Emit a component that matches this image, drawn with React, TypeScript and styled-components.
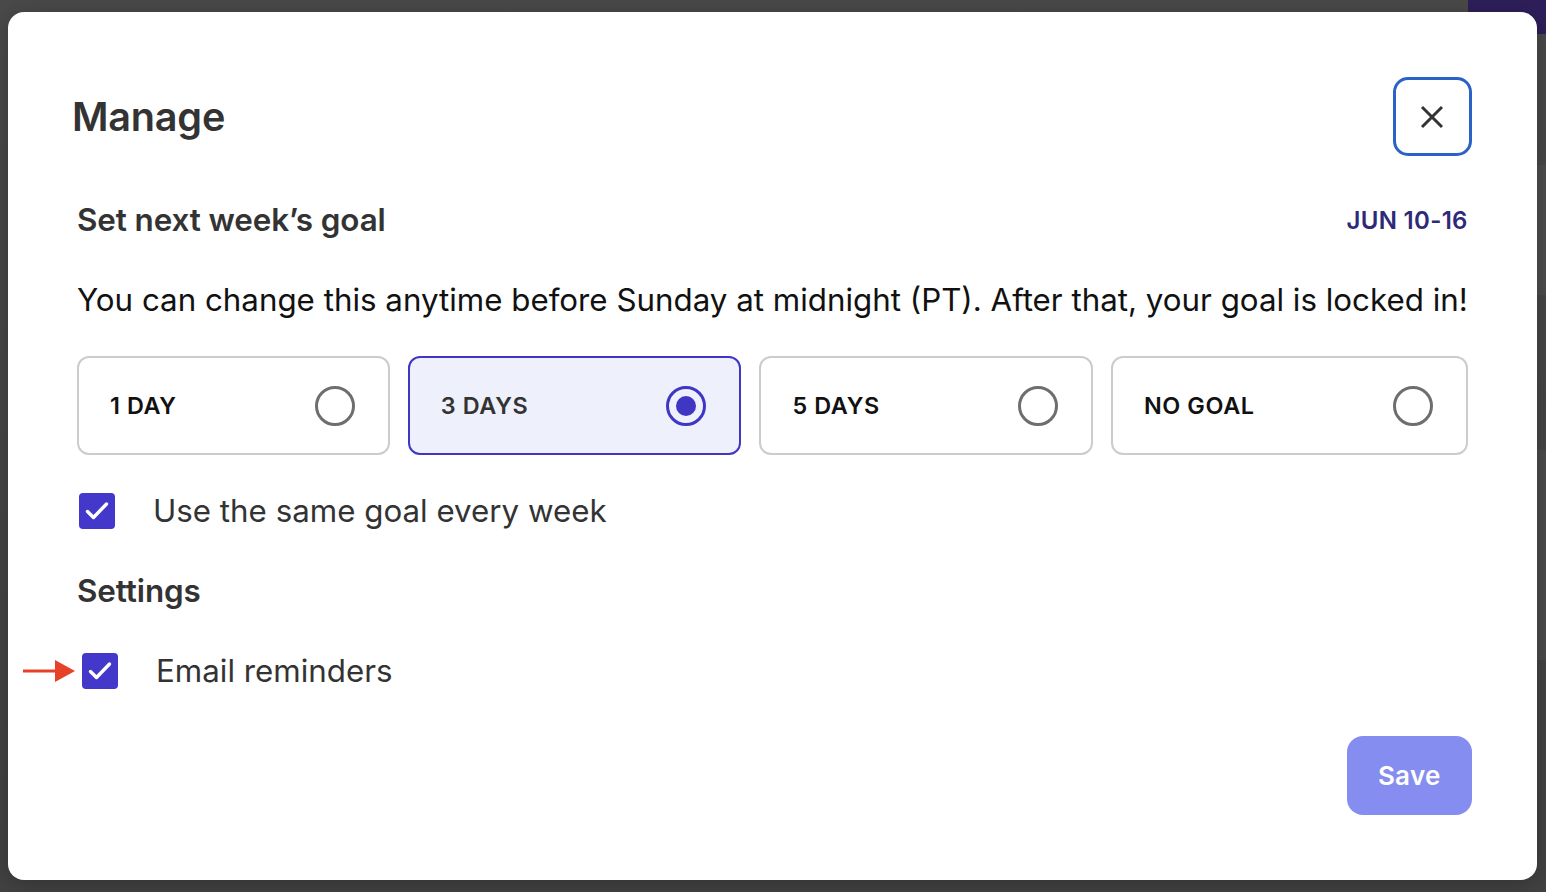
import React, { useState } from "react";
import styled, { createGlobalStyle, css } from "styled-components";

const GlobalStyle = createGlobalStyle`
  html, body { margin: 0; padding: 0; }
  body {
    font-family: Inter, "Noto Sans", Arial, sans-serif;
    background: #464646;
    overflow: hidden;
  }
  * { box-sizing: border-box; }
`;

const Screen = styled.div`
  position: relative;
  width: 1546px;
  height: 892px;
  background: linear-gradient(#4a4a4a, #424242);
  overflow: hidden;
`;

const BackdropAccent = styled.div`
  position: absolute;
  top: -20px;
  right: -20px;
  width: 98px;
  height: 54px;
  border-radius: 0 0 0 24px;
  background: #2e1f5a;
`;

const BackdropBand = styled.div<{ $top: number; $h: number; $c: string }>`
  position: absolute;
  right: 0;
  width: 40px;
  top: ${(p) => p.$top}px;
  height: ${(p) => p.$h}px;
  background: ${(p) => p.$c};
`;

const Overlay = styled.div`
  position: relative;
  display: flex;
  padding: 12px 10px 12px 8px;
  height: 100%;
`;

const Dialog = styled.div`
  flex: 1;
  display: flex;
  flex-direction: column;
  background: #ffffff;
  border-radius: 16px;
  box-shadow: 0 4px 24px rgba(0, 0, 0, 0.25);
`;

const Header = styled.div`
  display: flex;
  align-items: center;
  justify-content: space-between;
  padding: 65px 65px 0 64px;
`;

const Title = styled.h1`
  margin: 0;
  font-size: 39.6px;
  font-weight: 600;
  color: #333333;
  letter-spacing: -0.2px;
`;

const CloseButton = styled.button`
  width: 79px;
  height: 79px;
  display: flex;
  align-items: center;
  justify-content: center;
  background: #fff;
  border: 3px solid #2a62c8;
  border-radius: 15px;
  padding: 0;
  cursor: pointer;
`;

const Body = styled.div`
  display: flex;
  flex-direction: column;
  padding: 0 69px;
`;

const GoalHeader = styled.div`
  display: flex;
  align-items: center;
  justify-content: space-between;
  margin-top: 44px;
  height: 40px;
`;

const SectionTitle = styled.h2`
  margin: 0;
  font-size: 31.4px;
  font-weight: 600;
  color: #333333;
  letter-spacing: -0.1px;
`;

const DateRange = styled.span`
  font-size: 24px;
  font-weight: 600;
  color: #2e2a78;
  letter-spacing: 0.3px;
`;

const Description = styled.p`
  margin: 40px 0 0;
  font-size: 31.3px;
  line-height: 40px;
  color: #111111;
  white-space: nowrap;
`;

const Options = styled.div`
  display: flex;
  gap: 18px;
  margin-top: 36px;
`;

const Option = styled.button<{ $selected?: boolean }>`
  flex: 1 1 auto;
  height: 99px;
  display: flex;
  align-items: center;
  justify-content: space-between;
  padding: 0 33px 0 31px;
  border-radius: 12px;
  border: 2px solid #cccccc;
  background: #ffffff;
  font-family: inherit;
  font-size: 23.4px;
  font-weight: 600;
  letter-spacing: 0.6px;
  color: #111111;
  cursor: pointer;
  ${(p) =>
    p.$selected &&
    css`
      border-color: #3f36c4;
      background: #eef0fc;
      color: #333333;
    `}
`;

const OptionLabel = styled.span`
  margin-right: 134px;
  white-space: nowrap;
`;

const Radio = styled.span<{ $checked?: boolean }>`
  width: 40px;
  height: 40px;
  flex: none;
  border-radius: 50%;
  border: 3.5px solid ${(p) => (p.$checked ? "#3f36c4" : "#6e6e6e")};
  display: flex;
  align-items: center;
  justify-content: center;
  &::after {
    content: "";
    width: 20px;
    height: 20px;
    border-radius: 50%;
    background: #3f36c4;
    display: ${(p) => (p.$checked ? "block" : "none")};
  }
`;

const CheckRow = styled.label<{ $offset?: number }>`
  display: flex;
  align-items: center;
  gap: 38px;
  padding-left: ${(p) => p.$offset ?? 2}px;
  font-size: 31.3px;
  color: #333333;
  cursor: pointer;
`;

const Box = styled.span`
  width: 36px;
  height: 36px;
  flex: none;
  border-radius: 4px;
  background: #4338ca;
  display: flex;
  align-items: center;
  justify-content: center;
`;

const Pointer = styled.span`
  position: absolute;
  left: -59px;
  top: 50%;
  transform: translateY(-50%);
  display: flex;
`;

const CheckWrap = styled.span`
  position: relative;
  display: flex;
`;

const SameGoalRow = styled.div`
  margin-top: 36px;
  height: 40px;
  display: flex;
  align-items: center;
`;

const SettingsTitle = styled(SectionTitle)`
  margin-top: 40px;
  line-height: 40px;
`;

const EmailRow = styled.div`
  margin-top: 40px;
  height: 40px;
  display: flex;
  align-items: center;
`;

const Footer = styled.div`
  margin-top: auto;
  display: flex;
  justify-content: flex-end;
  padding: 0 65px 65px;
`;

const SaveButton = styled.button`
  width: 125px;
  height: 79px;
  border: none;
  border-radius: 16px;
  background: #858ef0;
  color: #ffffff;
  font-family: inherit;
  font-size: 26px;
  font-weight: 600;
  letter-spacing: 0.3px;
  cursor: default;
`;

const CheckMark = () => (
  <svg width="36" height="36" viewBox="0 0 36 36" fill="none">
    <polyline
      points="8.5,18.5 14.5,24.5 27.5,11"
      stroke="#ffffff"
      strokeWidth="3.4"
      strokeLinecap="round"
      strokeLinejoin="round"
    />
  </svg>
);

const CloseIcon = () => (
  <svg width="24" height="24" viewBox="0 0 24 24" fill="none">
    <path d="M2 2 L22 22 M22 2 L2 22" stroke="#333333" strokeWidth="3" strokeLinecap="butt" />
  </svg>
);

const RedArrow = () => (
  <svg width="54" height="26" viewBox="0 0 54 26">
    <rect x="0" y="11.5" width="34" height="3" fill="#e8412a" />
    <polygon points="32,2 52,13 32,24" fill="#e8412a" />
  </svg>
);

const options = ["1 DAY", "3 DAYS", "5 DAYS", "NO GOAL"];

export default function App() {
  const [selected, setSelected] = useState("3 DAYS");
  return (
    <>
      <GlobalStyle />
      <Screen>
        <BackdropBand $top={165} $h={130} $c="#4e4e4e" />
        <BackdropBand $top={450} $h={210} $c="#4c4c4c" />
        <BackdropAccent />
        <Overlay>
          <Dialog>
            <Header>
              <Title>Manage</Title>
              <CloseButton aria-label="Close">
                <CloseIcon />
              </CloseButton>
            </Header>
            <Body>
              <GoalHeader>
                <SectionTitle>Set next week’s goal</SectionTitle>
                <DateRange>JUN 10-16</DateRange>
              </GoalHeader>
              <Description>
                You can change this anytime before Sunday at midnight (PT). After that, your goal is locked in!
              </Description>
              <Options>
                {options.map((o) => (
                  <Option key={o} $selected={selected === o} onClick={() => setSelected(o)}>
                    <OptionLabel>{o}</OptionLabel>
                    <Radio $checked={selected === o} />
                  </Option>
                ))}
              </Options>
              <SameGoalRow>
                <CheckRow>
                  <Box>
                    <CheckMark />
                  </Box>
                  Use the same goal every week
                </CheckRow>
              </SameGoalRow>
              <SettingsTitle>Settings</SettingsTitle>
              <EmailRow>
                <CheckRow $offset={5}>
                  <CheckWrap>
                    <Pointer>
                      <RedArrow />
                    </Pointer>
                    <Box>
                      <CheckMark />
                    </Box>
                  </CheckWrap>
                  Email reminders
                </CheckRow>
              </EmailRow>
            </Body>
            <Footer>
              <SaveButton>Save</SaveButton>
            </Footer>
          </Dialog>
        </Overlay>
      </Screen>
    </>
  );
}
